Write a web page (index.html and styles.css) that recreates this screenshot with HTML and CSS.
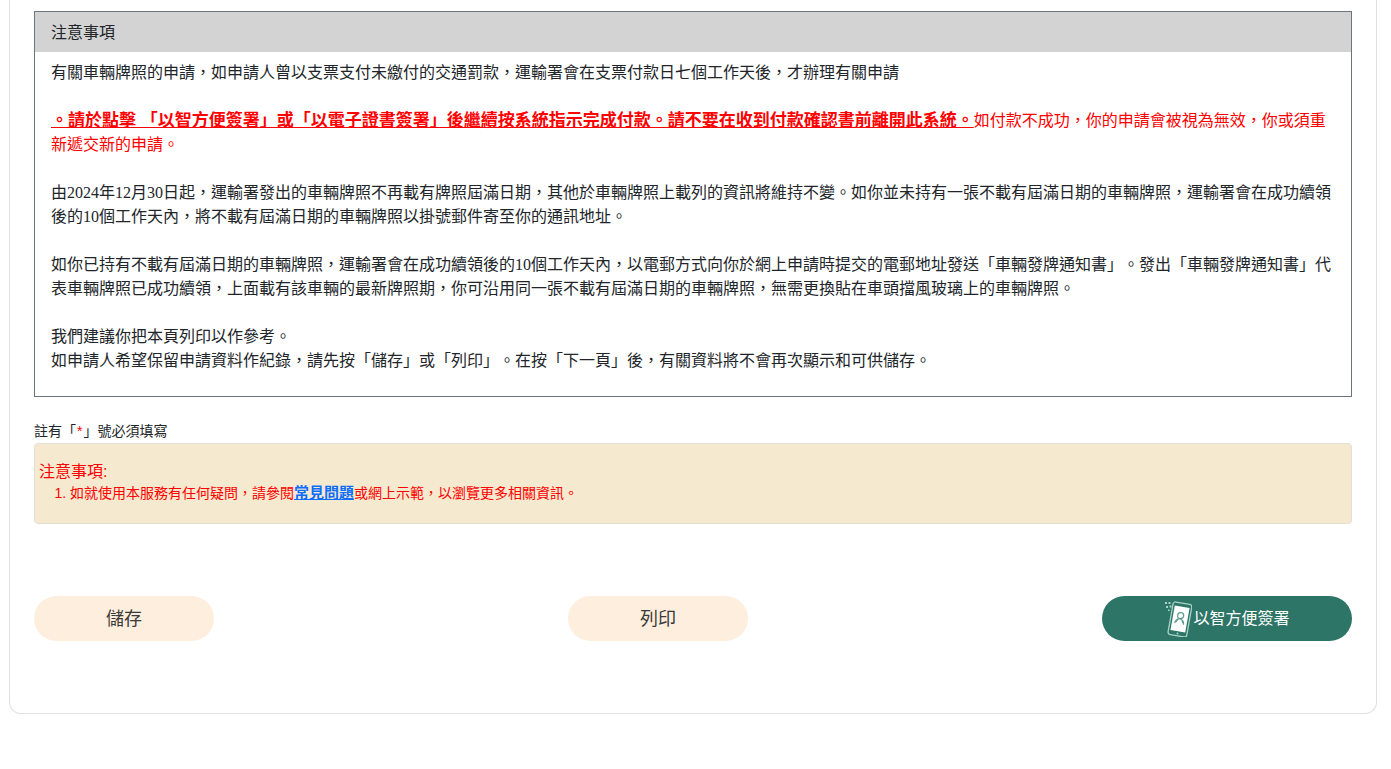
FILE: index.html
```html
<!DOCTYPE html>
<html lang="zh-Hant">
<head>
<meta charset="utf-8">
<title>注意事項</title>
<link rel="stylesheet" href="styles.css">
</head>
<body>
<main class="card">
  <section class="panel">
    <header class="panel-head">注意事項</header>
    <div class="panel-body">
      <p>有關車輛牌照的申請，如申請人曾以支票支付未繳付的交通罰款，運輸署會在支票付款日七個工作天後，才辦理有關申請</p>
      <p class="alert"><strong class="alert-strong">。請於點擊 「以智方便簽署」或「以電子證書簽署」後繼續按系統指示完成付款。請不要在收到付款確認書前離開此系統。</strong>如付款不成功，你的申請會被視為無效，你或須重新遞交新的申請。</p>
      <p class="dated">由2024年12月30日起，運輸署發出的車輛牌照不再載有牌照屆滿日期，其他於車輛牌照上載列的資訊將維持不變。如你並未持有一張不載有屆滿日期的車輛牌照，運輸署會在成功續領後的10個工作天內，將不載有屆滿日期的車輛牌照以掛號郵件寄至你的通訊地址。</p>
      <p class="dated">如你已持有不載有屆滿日期的車輛牌照，運輸署會在成功續領後的10個工作天內，以電郵方式向你於網上申請時提交的電郵地址發送「車輛發牌通知書」。發出「車輛發牌通知書」代表車輛牌照已成功續領，上面載有該車輛的最新牌照期，你可沿用同一張不載有屆滿日期的車輛牌照，無需更換貼在車頭擋風玻璃上的車輛牌照。</p>
      <p>我們建議你把本頁列印以作參考。<br>如申請人希望保留申請資料作紀錄，請先按「儲存」或「列印」。在按「下一頁」後，有關資料將不會再次顯示和可供儲存。</p>
    </div>
  </section>

  <p class="required">註有「<span class="star">*</span>」號必須填寫</p>

  <section class="notice">
    <h2 class="notice-title">注意事項:</h2>
    <ol class="notice-list">
      <li>如就使用本服務有任何疑問，請參閱<a class="notice-link" href="#">常見問題</a>或網上示範，以瀏覽更多相關資訊。</li>
    </ol>
  </section>

  <div class="actions">
    <button class="btn btn-light" type="button"><span class="btn-label">儲存</span></button>
    <button class="btn btn-light" type="button"><span class="btn-label">列印</span></button>
    <button class="btn btn-green" type="button">
      <svg class="btn-icon" viewBox="0 0 28 36" width="28" height="36" aria-hidden="true">
        <g fill="#a9d2c6">
          <rect x="1" y="1" width="2" height="2"/><rect x="4.500" y="1" width="2" height="2"/>
          <rect x="2" y="5" width="2" height="2"/><rect x="5.500" y="4.500" width="2" height="2"/>
          <rect x="4" y="8.500" width="1.600" height="1.600"/><rect x="8" y="7" width="1.600" height="1.600"/>
        </g>
        <g transform="rotate(10 16 18)">
          <rect x="6.500" y="2" width="19" height="33" rx="2.500" fill="#2d7566" stroke="#a9d2c6" stroke-width="1.300"/>
          <rect x="8.500" y="5.500" width="15" height="25" fill="#fff"/>
          <circle cx="16" cy="32.700" r="1" fill="#a9d2c6"/>
          <circle cx="16" cy="14.500" r="3" fill="none" stroke="#5f9c8d" stroke-width="1.200"/>
          <path d="M11.500 23c.4-3.500 2-5 4.500-5s4.100 1.500 4.500 5M14 18.500l-1.500 3M18 18.500l1.500 3" fill="none" stroke="#5f9c8d" stroke-width="1.200"/>
        </g>
      </svg>
      <span class="btn-label">以智方便簽署</span>
    </button>
  </div>
</main>
</body>
</html>
```
FILE: styles.css
```css
* {
  box-sizing: border-box;
}

html,
body {
  margin: 0;
  background: #fff;
}

body {
  font-family: "Liberation Sans", "Noto Sans CJK TC", sans-serif;
  font-size: 16px;
  line-height: 24px;
  color: #212529;
  padding-bottom: 56px;
  text-spacing-trim: space-all;
  font-kerning: none;
}

.card {
  margin: 0 14px 0 9px;
  padding: 11px 24px 72px;
  border: 1px solid #e0e0e0;
  border-top: 0;
  border-radius: 0 0 12px 12px;
}

.panel {
  border: 1px solid #6c757d;
  height: 386px;
}

.panel-head {
  height: 40px;
  padding: 9px 16px 7px;
  background: #d3d3d3;
}

.panel-body {
  padding: 9px 16px 0;
}

.panel-body p {
  margin: 0 0 24px;
}

.panel-body .dated {
  font-family: "Liberation Serif", "Noto Sans CJK TC", sans-serif;
}

.alert {
  color: #f00;
}

.alert-strong {
  font-size: 17px;
  font-weight: 700;
  text-decoration: underline;
}

.required {
  margin: 24px 0 0;
  height: 22px;
  font-size: 14px;
  line-height: 20px;
}

.star {
  padding: 0 1px;
  color: #f00;
}

.notice {
  height: 81px;
  padding: 15px 4px 8px;
  background: #f5e9cf;
  border: 1px solid #e3e0d2;
  border-radius: 4px;
  color: #f00;
}

.notice-title {
  margin: 0;
  padding-top: 1px;
  font-size: 16px;
  font-weight: 400;
  line-height: 24px;
}

.notice-list {
  margin: 0;
  padding-left: 31px;
  font-size: 14px;
  line-height: 18px;
}

.notice-link {
  color: #0d6efd;
  font-size: 15px;
  font-weight: 700;
  text-decoration: underline;
}

.actions {
  display: flex;
  justify-content: space-between;
  margin-top: 72px;
}

.btn {
  display: flex;
  align-items: center;
  justify-content: center;
  width: 180px;
  height: 45px;
  padding: 0;
  border: 0;
  border-radius: 23px;
  font-family: inherit;
  font-size: 18px;
}

.btn-label {
  margin-bottom: 4px;
}

.btn-light {
  background: #feeedd;
  color: #3a3a3a;
}

.btn-green {
  width: 250px;
  gap: 1px;
  background: #2d7566;
  color: #fff;
  font-size: 16px;
}

.btn-icon {
  display: block;
}
```
